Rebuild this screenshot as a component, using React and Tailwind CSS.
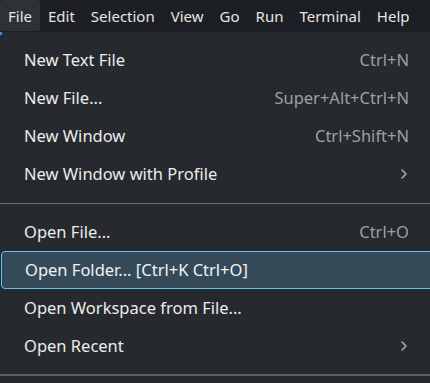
import { ChevronRight } from "lucide-react"

const menuBar = ["File", "Edit", "Selection", "View", "Go", "Run", "Terminal", "Help"]

const groups = [
  [
    { label: "New Text File", shortcut: "Ctrl+N" },
    { label: "New File...", shortcut: "Super+Alt+Ctrl+N" },
    { label: "New Window", shortcut: "Ctrl+Shift+N" },
    { label: "New Window with Profile", submenu: true },
  ],
  [
    { label: "Open File...", shortcut: "Ctrl+O" },
    { label: "Open Folder... [Ctrl+K Ctrl+O]", active: true },
    { label: "Open Workspace from File..." },
    { label: "Open Recent", submenu: true },
  ],
]

const MenuItem = ({ item }) => (
  <div
    className={
      item.active
        ? "flex h-[38px] items-center justify-between ml-px -mr-3 pl-[23px] pr-[33px] rounded-[4px] border border-[#63c1ee] bg-[#344a59] text-[#f2f2f2]"
        : "flex h-[38px] items-center justify-between pl-6 pr-[21px] text-[#ececec]"
    }
  >
    <span>{item.label}</span>
    {item.shortcut && <span className="text-[#9ca0a5]">{item.shortcut}</span>}
    {item.submenu && <ChevronRight className="w-4 h-4 text-[#b5b8bb] -mr-[3px]" strokeWidth={2} />}
  </div>
)

export default function App() {
  return (
    <div
      className="w-[430px] h-[383px] overflow-hidden bg-[#26292d] relative"
      style={{ fontFamily: '"Noto Sans", "Open Sans", sans-serif' }}
    >
      {/* Menu bar */}
      <div className="flex h-8 items-start bg-[#1c1f23] text-[15px] text-[#e6e6e6]">
        {menuBar.map((name) => (
          <div
            key={name}
            className={
              name === "File"
                ? "h-[31px] pt-[2px] flex items-center px-2 rounded-[3px] bg-[#2e3236]"
                : "h-[31px] pt-[2px] flex items-center px-2"
            }
          >
            {name}
          </div>
        ))}
      </div>

      {/* Dropdown */}
      <div className="relative pt-[9px] text-[16.5px]">
        <div className="absolute left-0 top-0 w-[2px] h-[3px] bg-[#3d8fe0]" />
        {groups.map((group, gi) => (
          <div key={gi}>
            {group.map((item) => (
              <MenuItem key={item.label} item={item} />
            ))}
            <div className="h-5 flex items-center">
              <div className={gi === 0 ? "w-full h-px bg-[#6e7174]" : "w-full h-[2px] bg-[#5f6265]"} />
            </div>
          </div>
        ))}
      </div>
    </div>
  )
}
